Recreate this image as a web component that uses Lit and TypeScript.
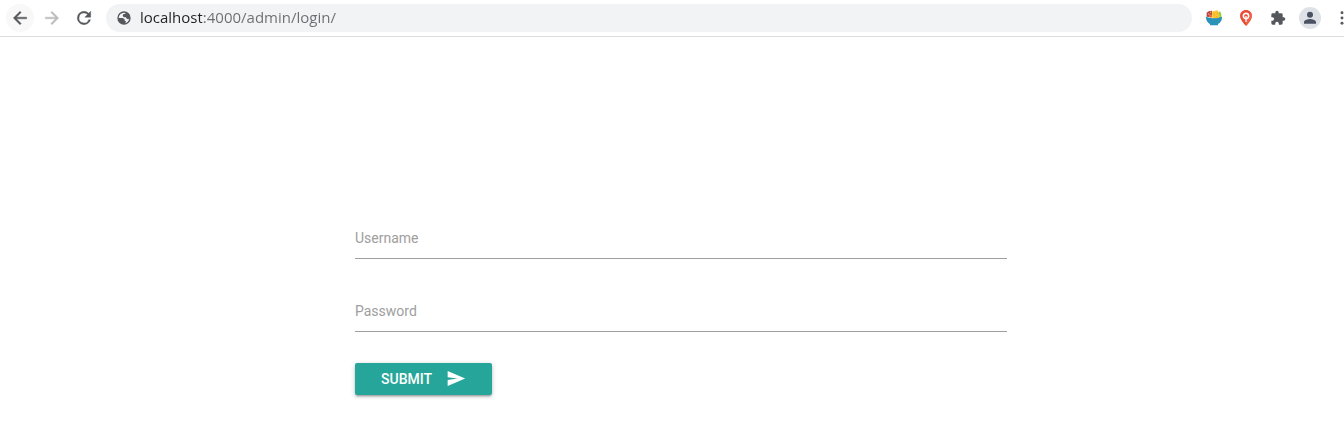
import { LitElement, html, css, svg } from "lit";
import { customElement, property, state } from "lit/decorators.js";

const icons = {
  back: svg`<path fill="currentColor" stroke="currentColor" stroke-width=".5" d="M20 11H7.83l5.59-5.59L12 4l-8 8 8 8 1.41-1.41L7.83 13H20v-2z"/>`,
  forward: svg`<path fill="currentColor" stroke="currentColor" stroke-width=".5" d="M12 4l-1.41 1.41L16.17 11H4v2h12.17l-5.58 5.59L12 20l8-8z"/>`,
  reload: svg`<path fill="currentColor" stroke="currentColor" stroke-width=".5" d="M17.65 6.35A7.96 7.96 0 0 0 12 4a8 8 0 1 0 7.73 10h-2.08A6 6 0 1 1 12 6c1.66 0 3.14.69 4.22 1.78L13 11h7V4l-2.35 2.35z"/>`,
  globe: svg`
    <circle cx="12" cy="12" r="9" fill="none" stroke="currentColor" stroke-width="2"/>
    <path fill="currentColor" d="M14 3a9 9 0 0 1 7 9l-2 2-3-1-1-2h-3l-2-2 1-3h3zM3 12h7l3 2v2l2 1-1 3-2 1a9 9 0 0 1-9-9z"/>`,
  bowl: svg`
    <path fill="#8fcf4d" d="M16 6l5-4 2 4v6h-7z"/>
    <path fill="#b8413f" d="M1 10V4q2-3 8-3v10z"/>
    <circle cx="4" cy="6" r="1.3" fill="#e8a08e"/>
    <circle cx="7" cy="3.5" r="1.2" fill="#e8a08e"/>
    <circle cx="7" cy="9" r="2.6" fill="#e5763c"/>
    <path fill="#fbc531" d="M9 4q1-4 4-2 3-3 5 0 3 2 1 5l2 2-3 4h-7q-3-2-1-5-2-1-1-4z"/>
    <path fill="#f7a928" d="M11 6h2v2h-2zM16 4h2v2h-2zM15 9h2v2h-2z"/>
    <path fill="#2a93ba" d="M0 10q12 5 24 0v2a12 12 0 0 1-6 9v2H6v-2a12 12 0 0 1-6-9z"/>`,
  pin: svg`
    <path fill="#ea4b35" d="M12 0c-5 0-9 3.8-9 9 0 6 9 15 9 15s9-9 9-15c0-5.2-4-9-9-9z"/>
    <path fill="#f26a4b" d="M12 17v7s9-9 9-15c0-2-1-4-2-5z" opacity=".7"/>
    <circle cx="12" cy="9" r="4" fill="none" stroke="#fff" stroke-width="2.4"/>
    <path stroke="#fff" stroke-width="2" d="M12 9v9"/>`,
  puzzle: svg`<path fill="currentColor" d="M20.5 11H19V7a2 2 0 0 0-2-2h-4V3.5a2.5 2.5 0 0 0-5 0V5H4a2 2 0 0 0-2 2v3.8h1.5a2.7 2.7 0 0 1 0 5.4H2V20a2 2 0 0 0 2 2h3.8v-1.5a2.7 2.7 0 0 1 5.4 0V22H17a2 2 0 0 0 2-2v-4h1.5a2.5 2.5 0 0 0 0-5z"/>`,
  person: svg`<path fill="currentColor" d="M12 11.5a4.5 4.5 0 1 0 0-9 4.5 4.5 0 0 0 0 9zm0 2c-3 0-9 1.5-9 4.5v2.500h18V18c0-3-6-4.500-9-4.500z"/>`,
  more: svg`<circle cx="12" cy="4" r="2.200" fill="currentColor"/><circle cx="12" cy="12" r="2.200" fill="currentColor"/><circle cx="12" cy="20" r="2.200" fill="currentColor"/>`,
  send: svg`<path fill="currentColor" d="M2 20.500l21-9L2 2.500v7.300l12 1.700-12 1.700z"/>`,
};

type IconName = keyof typeof icons;

@customElement("ui-icon")
export class UiIcon extends LitElement {
  @property() name: IconName = "more";

  static styles = css`
    :host {
      display: block;
      flex: none;
      width: 16px;
      height: 16px;
    }
    .glyph {
      display: block;
      width: 100%;
      height: 100%;
    }
  `;

  render() {
    return html`<svg class="glyph" viewBox="0 0 24 24" aria-hidden="true">${icons[this.name]}</svg>`;
  }
}

@customElement("browser-bar")
export class BrowserBar extends LitElement {
  static styles = css`
    :host {
      display: block;
      overflow: hidden;
    }
    .bar {
      display: flex;
      align-items: center;
      height: 36px;
      padding-left: 6px;
      border-bottom: 1px solid #dadce0;
      color: #54585d;
    }
    .group {
      display: flex;
      flex: none;
      gap: 4px;
    }
    .tool {
      display: grid;
      place-items: center;
      width: 28px;
      height: 28px;
      padding: 0;
      border: 0;
      border-radius: 50%;
      background: none;
      color: inherit;
    }
    .large {
      width: 20px;
      height: 20px;
    }
    .hovered {
      background: #f8f8f9;
    }
    .tool:disabled {
      color: #babcbe;
    }
    .address {
      display: flex;
      flex: 1;
      align-items: center;
      gap: 8px;
      height: 28px;
      margin: 0 8px;
      padding: 0 10px;
      border-radius: 14px;
      background: #f1f3f4;
    }
    .url {
      flex: 1;
      min-width: 0;
      height: 28px;
      padding: 0 0 2px;
      box-sizing: border-box;
      border: 0;
      outline: 0;
      background: linear-gradient(to right, #202124 62px, #6a6d71 62px);
      background-clip: text;
      -webkit-background-clip: text;
      color: transparent;
      font: 15px/26px "Open Sans", "Noto Sans", sans-serif;
    }
    .avatar {
      display: grid;
      place-items: center;
      width: 22px;
      height: 22px;
      border-radius: 50%;
      background: #dee1e6;
      color: #4a5263;
    }
    .extensions {
      margin-right: -12px;
    }
  `;

  render() {
    return html`
      <header class="bar">
        <nav class="group">
          <button class="tool hovered" aria-label="Back"><ui-icon class="large" name="back"></ui-icon></button>
          <button class="tool" aria-label="Forward" disabled><ui-icon class="large" name="forward"></ui-icon></button>
          <button class="tool" aria-label="Reload"><ui-icon class="large" name="reload"></ui-icon></button>
        </nav>
        <div class="address">
          <ui-icon name="globe"></ui-icon>
          <input class="url" type="text" aria-label="Address" spellcheck="false" value="localhost:4000/admin/login/" />
        </div>
        <div class="group extensions">
          <button class="tool" aria-label="Recipes"><ui-icon name="bowl"></ui-icon></button>
          <button class="tool" aria-label="Location"><ui-icon name="pin"></ui-icon></button>
          <button class="tool" aria-label="Extensions"><ui-icon name="puzzle"></ui-icon></button>
          <button class="tool" aria-label="Profile"><span class="avatar"><ui-icon name="person"></ui-icon></span></button>
          <button class="tool" aria-label="Menu"><ui-icon name="more"></ui-icon></button>
        </div>
      </header>
    `;
  }
}

@customElement("login-form")
export class LoginForm extends LitElement {
  @state() private values: Record<string, string> = {};

  static styles = css`
    :host {
      display: block;
      font-family: Roboto, sans-serif;
    }
    .form {
      width: 652px;
      max-width: 100%;
      margin: 0 auto;
    }
    .field {
      display: grid;
      height: 41px;
      margin-bottom: 32px;
    }
    .label,
    .input {
      grid-area: 1 / 1;
    }
    .label {
      color: #9e9e9e;
      font-size: 14px;
      line-height: 20px;
      padding-top: 10px;
    }
    .filled {
      visibility: hidden;
    }
    .input {
      box-sizing: border-box;
      width: 100%;
      padding: 0;
      border: 0;
      border-bottom: 1px solid #9e9e9e;
      outline: 0;
      background: transparent;
      font: 14px/20px Roboto, sans-serif;
    }
    .submit {
      display: flex;
      align-items: center;
      gap: 14px;
      height: 32px;
      margin-top: -1px;
      padding: 0 26px;
      border: 0;
      border-radius: 2px;
      background: #26a69a;
      color: #fff;
      font: 500 14px/32px Roboto, sans-serif;
      text-transform: uppercase;
      box-shadow: 0 2px 2px rgba(0, 0, 0, 0.14), 0 3px 1px -2px rgba(0, 0, 0, 0.12), 0 1px 5px rgba(0, 0, 0, 0.2);
    }
    .send {
      width: 20px;
      height: 20px;
    }
  `;

  private setValue(name: string, e: Event) {
    this.values = { ...this.values, [name]: (e.target as HTMLInputElement).value };
  }

  private field(name: string, label: string, type: string) {
    return html`
      <div class="field">
        <label class="label ${this.values[name] ? "filled" : ""}" for=${name}>${label}</label>
        <input class="input" id=${name} name=${name} type=${type} @input=${(e: Event) => this.setValue(name, e)} />
      </div>
    `;
  }

  render() {
    return html`
      <form class="form" @submit=${(e: Event) => e.preventDefault()}>
        ${this.field("username", "Username", "text")} ${this.field("password", "Password", "password")}
        <button class="submit" type="submit">Submit<ui-icon class="send" name="send"></ui-icon></button>
      </form>
    `;
  }
}

@customElement("app-root")
export class AppRoot extends LitElement {
  static styles = css`
    :host {
      display: block;
      background: #fff;
    }
    .page {
      padding: 181px 0 24px 18px;
    }
  `;

  render() {
    return html`
      <browser-bar></browser-bar>
      <main class="page"><login-form></login-form></main>
    `;
  }
}
